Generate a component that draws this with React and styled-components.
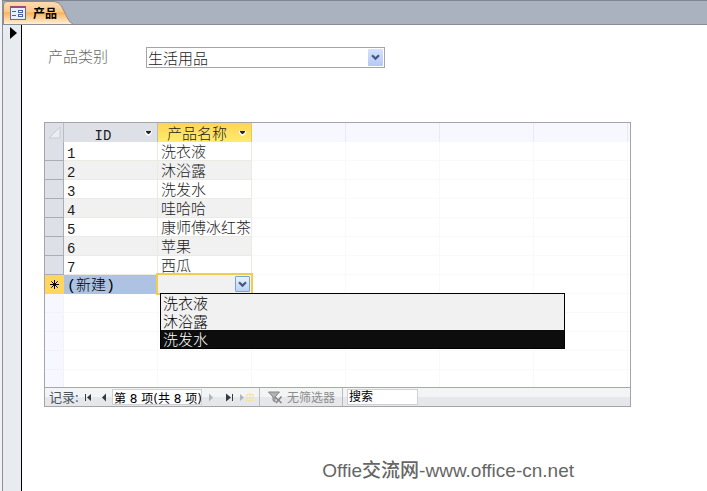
import React, { useState } from 'react'
import styled, { createGlobalStyle, css } from 'styled-components'

const cjk = '"Noto Sans CJK SC", sans-serif'

const GlobalStyle = createGlobalStyle`
  * {
    box-sizing: border-box;
  }
  body {
    margin: 0;
    background: #fff;
    font: 300 15px/18px ${cjk};
    color: #1c1c1c;
  }
  button, input, select {
    margin: 0;
    padding: 0;
    border: 0;
    border-radius: 0;
    font: inherit;
    color: inherit;
    background: none;
  }
`

const Window = styled.div`
  display: flex;
  flex-direction: column;
  min-height: 100vh;
  border-left: 2px solid #f0f1f3;
`

const TabBar = styled.header`
  display: flex;
  align-items: flex-end;
  height: 25px;
  border-top: 1px solid #7f8590;
  border-left: 1px solid #8a8f9a;
  border-bottom: 1px solid #8a8d98;
  background: #abb2bf;
`

const Tab = styled.button`
  position: relative;
  isolation: isolate;
  display: flex;
  align-items: center;
  gap: 7px;
  width: 70px;
  height: 23px;
  padding-left: 7px;
  font-size: 12px;
  font-weight: 700;
  color: #000;
`

const TabShape = styled.svg`
  position: absolute;
  left: 0;
  top: 0;
  z-index: -1;
`

const Main = styled.div`
  display: flex;
  flex: 1;
`

const RecordSelector = styled.button`
  display: flex;
  justify-content: center;
  align-items: flex-start;
  width: 20px;
  padding: 2px 0 0 2px;
  border-left: 1px solid #8a8f9a;
  border-right: 1px solid #000;
  background: #e8ebf0;
`

const Form = styled.main`
  flex: 1;
  min-width: 0;
  padding: 22px 76px 0 22px;
`

const Field = styled.div`
  display: flex;
  align-items: flex-start;
  margin-left: 4px;
`

const FieldLabel = styled.label`
  width: 98px;
  color: #686868;
`

const Combo = styled.span`
  position: relative;
  display: flex;
  width: 239px;
  height: 21px;
  border: 1px solid #a5a5a5;
  background: #fff;
`

const ComboSelect = styled.select`
  flex: 1;
  min-width: 0;
  padding-left: 1px;
  appearance: none;
  outline: none;
`

const ComboArrow = styled.span`
  position: absolute;
  right: 1px;
  top: 1px;
  bottom: 1px;
  display: grid;
  place-items: center;
  width: 15px;
  pointer-events: none;
  border-radius: 1px;
  background: linear-gradient(#d6e2fd, #b4c8f6);
  ${p => p.$framed && css`
    border: 1px solid #7aa2d6;
    background: linear-gradient(#e9f2fd, #b9d3f5);
  `}
`

const Datasheet = styled.section`
  margin-top: 54px;
  border: 1px solid #a5a5a5;
`

const Sheet = styled.div`
  height: 264px;
  overflow: hidden;
`

const Table = styled.table`
  width: 100%;
  table-layout: fixed;
  border-collapse: separate;
  border-spacing: 0;
`

const Col = styled.col`
  width: ${p => p.$w};
`

const HeadCell = styled.th`
  height: 19px;
  padding: 0;
  border-right: 1px solid ${p => (p.$blank ? '#e9eaf2' : '#b9bdc6')};
  font-weight: inherit;
  background: ${p => (p.$blank ? '#f7f8ff' : '#dde1e7')};
  ${p => p.$active && css`
    border-right-color: #e8c85c;
    background: linear-gradient(#ffd457, #ffec6e);
  `}
  &:last-child {
    border-right: 0;
  }
`

const HeadButton = styled.button`
  display: flex;
  align-items: center;
  gap: 3px;
  width: 100%;
  height: 19px;
  padding-right: 5px;
  span {
    flex: 1;
  }
`

const RowHead = styled.th`
  height: 19px;
  padding: 0;
  border-right: 1px solid #a9adb5;
  border-bottom: 1px solid #a9adb5;
  background: #dde1e7;
  ${p => p.$current && css`
    border-color: #ffd65c;
    background: #ffd65c;
  `}
  ${p => p.$blank && css`
    border-color: #f2f2f8;
    background: #f7f8ff;
  `}
`

const Cell = styled.td`
  position: relative;
  height: 19px;
  padding: 0 0 0 3px;
  border-right: 1px solid ${p => (p.$blank ? '#f9f9f7' : '#ecebe3')};
  border-bottom: 1px solid ${p => (p.$blank ? '#f9f9f7' : '#ecebe3')};
  white-space: nowrap;
  line-height: 18px;
  background: ${p => (p.$shade ? '#f1f1f1' : '#fff')};
  ${p => p.$selected && css`
    border-color: #aec2e3;
    color: #000;
    background: #aec2e3;
  `}
  &:last-child {
    border-right: 0;
  }
`

const Mono = styled.span`
  display: block;
  height: 18px;
  font-family: "Liberation Mono", ${cjk};
  font-size: ${p => (p.$full ? '15px' : '14px')};
  line-height: 24px;
`

const CellEditor = styled.div`
  position: absolute;
  z-index: 1;
  inset: -2px;
  display: flex;
  border: 2px solid #f2cd4b;
  background: #f1f1f1;
`

const Options = styled.ul`
  position: absolute;
  z-index: 1;
  left: 2px;
  top: 18px;
  width: 405px;
  margin: 0;
  padding: 0;
  border: 1px solid #000;
  list-style: none;
  color: #000;
  background: #f1f1f1;
`

const Option = styled.li`
  height: 18px;
  padding-left: 2px;
  line-height: 18px;
  ${p => p.$active && css`
    color: #fff;
    background: #0d0d0d;
  `}
`

const NavBar = styled.nav`
  display: flex;
  align-items: center;
  height: 19px;
  border-top: 1px solid #a5a7b2;
  font-size: 13px;
  font-weight: 400;
  color: #4c535c;
  background: linear-gradient(#f2f4f6 50%, #e5e7ea 50%);
`

const NavLabel = styled.label`
  width: 31px;
  margin-left: 4px;
`

const NavButton = styled.button`
  display: grid;
  place-items: center;
  width: ${p => (p.$wide ? '18px' : '16px')};
  height: 18px;
`

const NavInput = styled.input`
  width: ${p => p.$w};
  height: 16px;
  padding-left: 1px;
  border: 1px solid #d0d1d6;
  font: 400 12px/14px "DejaVu Sans", ${cjk};
  color: #000;
  background: #fff;
  &::placeholder {
    color: #000;
    opacity: 1;
    line-height: 18px;
  }
`

const FilterButton = styled.button`
  display: flex;
  align-items: center;
  gap: 4px;
  height: 18px;
  margin: 0 4px 0 3px;
  padding: 0 7px 0 8px;
  border-left: 1px solid #b9bbc4;
  border-right: 1px solid #b9bbc4;
  font-size: 12px;
  color: #8d8d8d;
`

const Credit = styled.footer`
  margin-top: 52px;
  padding-right: 57px;
  text-align: right;
  font: 500 19px/24px "Liberation Sans", ${cjk};
  color: #666;
  white-space: nowrap;
`

const Chevron = () => (
  <svg width='9' height='7' viewBox='0 0 9 7'>
    <path d='M1 1.2 L4.5 4.6 L8 1.2' fill='none' stroke='#46587f' strokeWidth='2.2' />
  </svg>
)

const HeadArrow = () => (
  <svg width='7' height='6' viewBox='0 0 7 6'>
    <path d='M0 1h7v2L4 6H3L0 3z' fill='#fff' />
    <path d='M1 1h5v1L4 4H3L1 2z' fill='#222' />
  </svg>
)

const FormIcon = () => (
  <svg width='16' height='14' viewBox='0 0 16 14' shapeRendering='crispEdges'>
    <rect x='0.5' y='0.5' width='15' height='13' fill='#e8effb' stroke='#5a6cab' />
    <path d='M0 0h16v2H0z' fill='#9c4a78' />
    <path d='M2 5.5h4M2 9.5h4' stroke='#4a5fa5' />
    <path d='M8.5 4.5h4v2h-4zM8.5 8.5h4v2h-4z' fill='#fff' stroke='#4a5fa5' />
  </svg>
)

const NavIcon = ({ kind }) => (
  <svg width='14' height='9' viewBox='0 0 14 9'>
    {kind === 'first' && <path d='M4 1h1v7H4zM10 1v7L6 4.5z' fill='#333a44' />}
    {kind === 'prev' && <path d='M9 0.5v8L5 4.5z' fill='#333a44' />}
    {kind === 'next' && <path d='M5 0.5v8l4-4z' fill='#b1b4ba' />}
    {kind === 'last' && <path d='M4 0.5v8l5-4zM10 1h1v7h-1z' fill='#333a44' />}
    {kind === 'new' && (
      <>
        <path d='M0 1v7l4-3.5z' fill='#b1b4ba' />
        <path d='M6 1.5h8M6 4.5h8M6 7.5h8M7 1v7M10 0v9M13 1v7' stroke='#f3e3a4' />
      </>
    )}
  </svg>
)

const FilterIcon = () => (
  <svg width='15' height='13' viewBox='0 0 15 13'>
    <path d='M0.5 1h11L7 6v5L5 9.5V6z' fill='#b3b3b3' stroke='#858585' />
    <path d='M7 6l6.5 6M13.5 5.5L8 12' stroke='#858585' strokeWidth='1.6' />
  </svg>
)

const products = [
  [1, '洗衣液'],
  [2, '沐浴露'],
  [3, '洗发水'],
  [4, '哇哈哈'],
  [5, '康师傅冰红茶'],
  [6, '苹果'],
  [7, '西瓜']
]

const choices = ['洗衣液', '沐浴露', '洗发水']

const Blanks = () => [0, 1, 2, 3, 4].map(i => <Cell key={i} $blank />)

const NewMark = styled.svg`
  display: block;
  margin: auto;
`

function NewRow () {
  const [active, setActive] = useState(2)

  return (
    <tr>
      <RowHead scope='row' $current>
        <NewMark width='11' height='11' viewBox='0 0 11 11'>
          <path d='M5.5 1v9M1 5.5h9M2.3 2.3l6.4 6.4M8.7 2.3L2.3 8.7' stroke='#000' />
        </NewMark>
      </RowHead>
      <Cell $selected><Mono $full>(新建)</Mono></Cell>
      <Cell>
        <CellEditor>
          <ComboSelect aria-label='产品名称' defaultValue=''>
            <option value='' />
            {choices.map(c => <option key={c}>{c}</option>)}
          </ComboSelect>
          <ComboArrow $framed><Chevron /></ComboArrow>
          <Options role='listbox' aria-label='产品名称'>
            {choices.map((c, i) => (
              <Option
                key={c}
                role='option'
                aria-selected={i === active}
                $active={i === active}
                onMouseEnter={() => setActive(i)}
              >
                {c}
              </Option>
            ))}
          </Options>
        </CellEditor>
      </Cell>
      <Blanks />
    </tr>
  )
}

function ProductSheet () {
  return (
    <Sheet>
      <Table>
        <colgroup>
          <Col $w='19px' />
          {[0, 1, 2, 3, 4, 5].map(i => <Col key={i} $w='94px' />)}
          <Col $w='auto' />
        </colgroup>
        <thead>
          <tr>
            <HeadCell>
              <svg width='18' height='19' viewBox='0 0 18 19' display='block'>
                <path d='M4 15L15 4v11z' fill='#e9edf4' stroke='#c3ccda' />
              </svg>
            </HeadCell>
            <HeadCell scope='col'>
              <HeadButton><Mono>ID</Mono><HeadArrow /></HeadButton>
            </HeadCell>
            <HeadCell scope='col' $active>
              <HeadButton><span>产品名称</span><HeadArrow /></HeadButton>
            </HeadCell>
            {[0, 1, 2, 3, 4].map(i => <HeadCell key={i} $blank />)}
          </tr>
        </thead>
        <tbody>
          {products.map(([id, name], i) => (
            <tr key={id}>
              <RowHead scope='row' />
              <Cell $shade={i % 2 === 1}><Mono>{id}</Mono></Cell>
              <Cell $shade={i % 2 === 1}>{name}</Cell>
              <Blanks />
            </tr>
          ))}
          <NewRow />
          {[0, 1, 2, 3, 4].map(i => (
            <tr key={i}>
              <RowHead $blank />
              <Cell $blank />
              <Cell $blank />
              <Blanks />
            </tr>
          ))}
        </tbody>
      </Table>
    </Sheet>
  )
}

function RecordNav () {
  return (
    <NavBar>
      <NavLabel htmlFor='record'>记录:</NavLabel>
      <NavButton aria-label='第一条'><NavIcon kind='first' /></NavButton>
      <NavButton aria-label='上一条'><NavIcon kind='prev' /></NavButton>
      <NavInput id='record' $w='90px' defaultValue='第 8 项(共 8 项)' />
      <NavButton $wide aria-label='下一条'><NavIcon kind='next' /></NavButton>
      <NavButton $wide aria-label='最后一条'><NavIcon kind='last' /></NavButton>
      <NavButton $wide aria-label='新记录'><NavIcon kind='new' /></NavButton>
      <FilterButton><FilterIcon />无筛选器</FilterButton>
      <NavInput $w='71px' aria-label='搜索' placeholder='搜索' />
    </NavBar>
  )
}

function App () {
  return (
    <>
      <GlobalStyle />
      <Window>
        <TabBar>
          <Tab>
            <TabShape width='70' height='23' viewBox='0 0 70 23'>
              <defs>
                <linearGradient id='tab' x1='0' y1='0' x2='0' y2='1'>
                  <stop offset='0' stopColor='#fbdcb4' />
                  <stop offset='0.45' stopColor='#fcc88a' />
                  <stop offset='0.5' stopColor='#fbb25c' />
                  <stop offset='1' stopColor='#fff0d8' />
                </linearGradient>
              </defs>
              <path d='M0.5 23V4Q0.5 0.5 4 0.5H50Q56 0.5 59 6L65 18Q67 22 70 23' fill='url(#tab)' stroke='#8f8a86' />
            </TabShape>
            <FormIcon />
            产品
          </Tab>
        </TabBar>
        <Main>
          <RecordSelector aria-label='记录选择器'>
            <svg width='7' height='12' viewBox='0 0 7 12'>
              <path d='M0 0l7 6-7 6z' fill='#000' />
            </svg>
          </RecordSelector>
          <Form>
            <Field>
              <FieldLabel htmlFor='category'>产品类别</FieldLabel>
              <Combo>
                <ComboSelect id='category'>
                  <option>生活用品</option>
                </ComboSelect>
                <ComboArrow><Chevron /></ComboArrow>
              </Combo>
            </Field>
            <Datasheet>
              <ProductSheet />
              <RecordNav />
            </Datasheet>
            <Credit>Offie交流网-www.office-cn.net</Credit>
          </Form>
        </Main>
      </Window>
    </>
  )
}

export default App
